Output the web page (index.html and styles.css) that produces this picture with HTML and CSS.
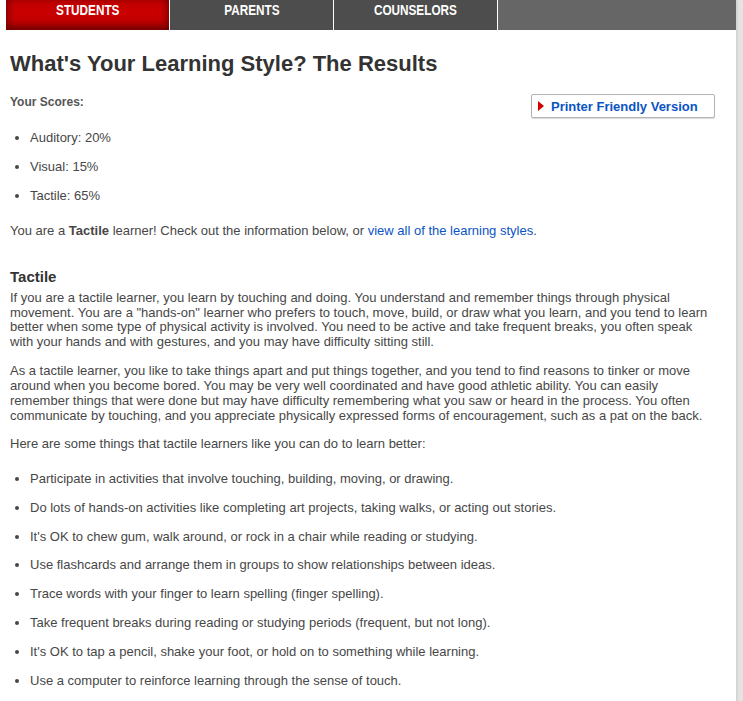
FILE: index.html
```html
<!DOCTYPE html>
<html>
<head>
<meta charset="utf-8">
<link rel="stylesheet" href="styles.css">
</head>
<body>
<div class="page">
  <nav class="tabs">
    <a class="tab tab-active"><span>STUDENTS</span></a>
    <a class="tab"><span>PARENTS</span></a>
    <a class="tab"><span>COUNSELORS</span></a>
    <div class="tab-fill"></div>
  </nav>
  <main class="content">
    <h1 class="title">What's Your Learning Style? The Results</h1>
    <div class="scores-row">
      <div class="scores-label">Your Scores:</div>
      <a class="print-btn"><span class="arrow"></span>Printer Friendly Version</a>
    </div>
    <ul class="list scores">
      <li>Auditory: 20%</li>
      <li>Visual: 15%</li>
      <li>Tactile: 65%</li>
    </ul>
    <p class="summary">You are a <b>Tactile</b> learner! Check out the information below, or <a class="link">view all of the learning styles</a>.</p>
    <h2 class="style-head">Tactile</h2>
    <p class="para first">If you are a tactile learner, you learn by touching and doing. You understand and remember things through physical movement. You are a "hands-on" learner who prefers to touch, move, build, or draw what you learn, and you tend to learn better when some type of physical activity is involved. You need to be active and take frequent breaks, you often speak with your hands and with gestures, and you may have difficulty sitting still.</p>
    <p class="para">As a tactile learner, you like to take things apart and put things together, and you tend to find reasons to tinker or move around when you become bored. You may be very well coordinated and have good athletic ability. You can easily remember things that were done but may have difficulty remembering what you saw or heard in the process. You often communicate by touching, and you appreciate physically expressed forms of encouragement, such as a pat on the back.</p>
    <p class="para">Here are some things that tactile learners like you can do to learn better:</p>
    <ul class="list tips">
      <li>Participate in activities that involve touching, building, moving, or drawing.</li>
      <li>Do lots of hands-on activities like completing art projects, taking walks, or acting out stories.</li>
      <li>It's OK to chew gum, walk around, or rock in a chair while reading or studying.</li>
      <li>Use flashcards and arrange them in groups to show relationships between ideas.</li>
      <li>Trace words with your finger to learn spelling (finger spelling).</li>
      <li>Take frequent breaks during reading or studying periods (frequent, but not long).</li>
      <li>It's OK to tap a pencil, shake your foot, or hold on to something while learning.</li>
      <li>Use a computer to reinforce learning through the sense of touch.</li>
    </ul>
  </main>
</div>
</body>
</html>
```
FILE: styles.css
```css
html, body {
  margin: 0;
  padding: 0;
}
body {
  background: #e4e4e4;
  font-family: "Liberation Sans", Arial, sans-serif;
  color: #474747;
  font-size: 13px;
  overflow: hidden;
}
.page {
  width: 736px;
  min-height: 701px;
  background: #fff;
  box-shadow: 1px 0 3px rgba(0,0,0,0.12);
}
.tabs {
  display: flex;
  height: 30px;
  margin-left: 6px;
  gap: 1px;
  background: #fff;
}
.tab {
  width: 163px;
  background: #4d4d4d;
  color: #fff;
  text-align: center;
  font-weight: bold;
  font-size: 14px;
  line-height: 21px;
}
.tab span {
  display: inline-block;
  transform: scaleX(0.84);
}
.tab-active {
  width: 163px;
  background: #c80000;
  box-shadow: inset 0 -3px 8px 1px rgba(60,0,0,0.7);
}
.tab-fill {
  flex: 1;
  background: #666;
}
.content {
  padding: 0 21px 20px 10px;
}
.title {
  margin: 21px 0 0;
  font-size: 22px;
  line-height: 26px;
  color: #333;
  font-weight: bold;
}
.scores-row {
  display: flex;
  justify-content: space-between;
  align-items: flex-start;
  margin-top: 17px;
}
.scores-label {
  font-weight: bold;
  font-size: 12px;
  line-height: 16px;
  color: #555;
}
.print-btn {
  margin-top: 0;
  width: 182px;
  height: 22px;
  box-sizing: content-box;
  border: 1px solid #b4b4b4;
  border-radius: 2px;
  box-shadow: 0 1px 1px rgba(0,0,0,0.15);
  display: flex;
  align-items: center;
  color: #0a54c4;
  font-weight: bold;
  font-size: 13px;
  background: #fff;
}
.arrow {
  width: 0;
  height: 0;
  border-top: 5px solid transparent;
  border-bottom: 5px solid transparent;
  border-left: 6px solid #d00000;
  margin: 0 7px 0 6px;
}
.list {
  margin: 0;
  padding-left: 20px;
  display: flex;
  flex-direction: column;
  gap: 13px;
}
.list li {
  line-height: 16px;
}
.scores {
  margin: 12px 0 19px;
}
.summary {
  margin: 0;
  line-height: 16px;
}
.link {
  color: #0a54c4;
}
.style-head {
  margin: 29px 0 0;
  font-size: 15px;
  line-height: 18px;
  color: #333;
}
.para {
  margin: 13px 0 0;
  line-height: 15px;
}
.para.first {
  margin-top: 5px;
  line-height: 14.7px;
}
.tips {
  margin-top: 20px;
  gap: 12.9px;
}
```
